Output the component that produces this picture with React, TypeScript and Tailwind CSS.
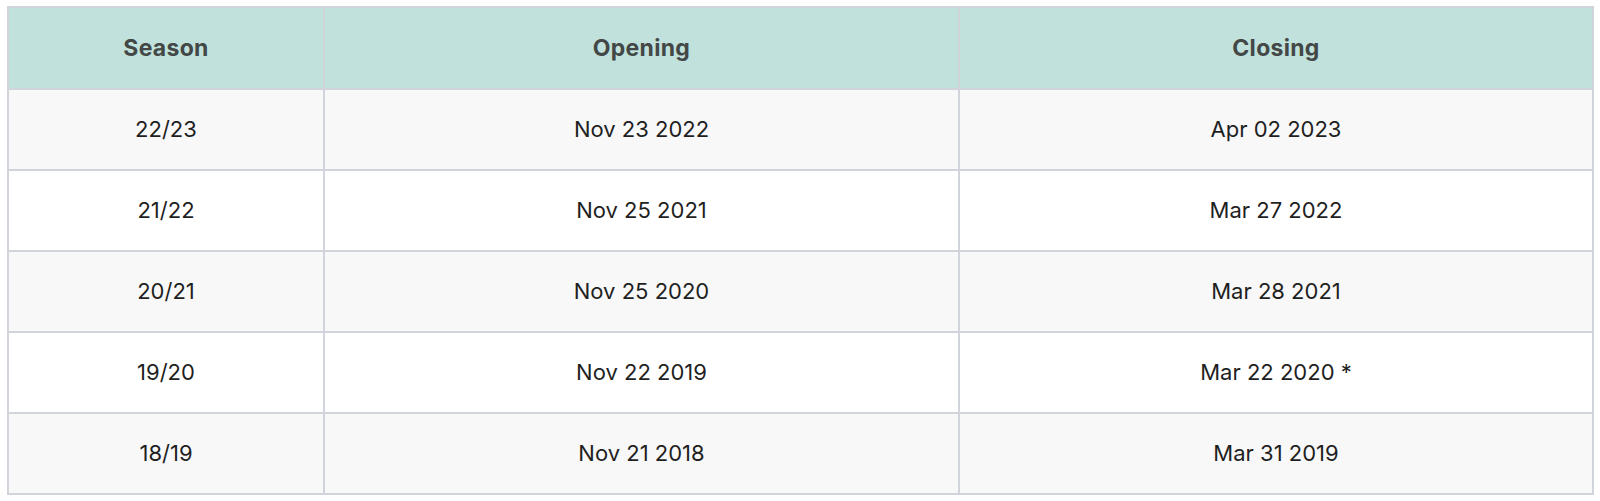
import React from "react";

const rows = [
  ["22/23", "Nov 23 2022", "Apr 02 2023"],
  ["21/22", "Nov 25 2021", "Mar 27 2022"],
  ["20/21", "Nov 25 2020", "Mar 28 2021"],
  ["19/20", "Nov 22 2019", "Mar 22 2020 *"],
  ["18/19", "Nov 21 2018", "Mar 31 2019"],
];

export default function App() {
  return (
    <div className="w-[1600px] h-[501px] bg-white pt-[6px] pl-[7px]" style={{ fontFamily: "Inter, 'Noto Sans', sans-serif" }}>
      <div className="w-[1587px] border-2 border-[#d2d4db] bg-[#d2d4db] grid grid-cols-[314px_633px_632px] gap-[2px]">
        {["Season", "Opening", "Closing"].map((h) => (
          <div key={h} className="h-[80px] bg-[#c1e2dc] flex items-center justify-center text-[23px] font-bold text-[#434847] tracking-[0.3px]">
            {h}
          </div>
        ))}
        {rows.map((r, i) =>
          r.map((c, j) => (
            <div
              key={`${i}-${j}`}
              className={`h-[79px] flex items-center justify-center text-[22px] text-[#1f1f1f] ${i % 2 === 0 ? "bg-[#f8f8f8]" : "bg-white"}`}
            >
              {c}
            </div>
          ))
        )}
      </div>
    </div>
  );
}
